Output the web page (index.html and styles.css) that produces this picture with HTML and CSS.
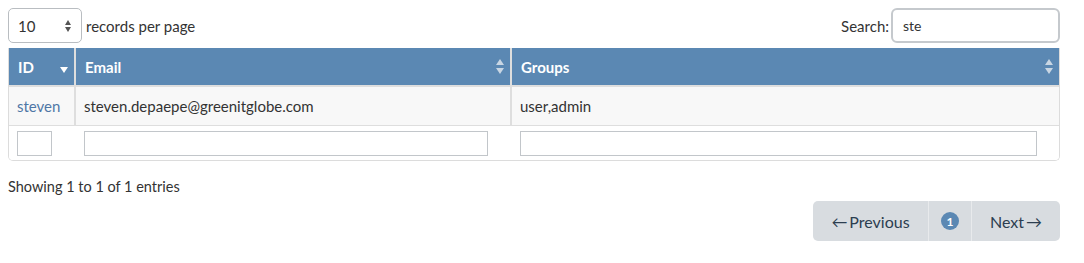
FILE: index.html
```html
<!DOCTYPE html>
<html lang="en">
<head>
    <meta charset="UTF-8">
    <title>Users</title>
    <link rel="stylesheet" href="styles.css">
</head>
<body>
    <div class="toolbar">
        <div class="length">
            <div class="select">10 <span class="spin"></span></div>
            <span>records per page</span>
        </div>
        <div class="search">
            <label>Search:</label>
            <div class="search-box">ste</div>
        </div>
    </div>

    <div class="grid">
        <table>
            <thead>
                <tr>
                    <th class="col-id">ID <span class="sort-desc"></span></th>
                    <th class="col-email">Email <span class="sort-both"></span></th>
                    <th class="col-groups">Groups <span class="sort-both"></span></th>
                </tr>
            </thead>
            <tbody>
                <tr class="data">
                    <td><a href="#">steven</a></td>
                    <td>steven.depaepe@greenitglobe.com</td>
                    <td>user,admin</td>
                </tr>
                <tr class="filters">
                    <td><div class="filter small"></div></td>
                    <td><div class="filter"></div></td>
                    <td><div class="filter"></div></td>
                </tr>
            </tbody>
        </table>
    </div>

    <div class="info">Showing 1 to 1 of 1 entries</div>

    <div class="pager-row">
        <div class="pager">
            <span class="page prev">&larr;&thinsp;Previous</span>
            <span class="page current"><span class="badge">1</span></span>
            <span class="page next">Next&thinsp;&rarr;</span>
        </div>
    </div>
</body>
</html>
```

FILE: styles.css
```css
body {
    margin: 8px;
    font-family: Lato, "Open Sans", sans-serif;
    font-size: 15px;
    color: #333;
    background: #fff;
}
.toolbar {
    display: flex;
    justify-content: space-between;
    align-items: center;
    height: 35px;
}
.length {
    display: flex;
    align-items: center;
    gap: 4px;
}
.select {
    width: 74px;
    height: 35px;
    box-sizing: border-box;
    border: 1px solid #b9bdc1;
    border-radius: 5px;
    padding: 0 9px;
    display: flex;
    align-items: center;
    justify-content: space-between;
}
.spin {
    position: relative;
    width: 7px;
    height: 12px;
}
.spin::before, .spin::after {
    content: "";
    position: absolute;
    left: 0;
    border-left: 3.5px solid transparent;
    border-right: 3.5px solid transparent;
}
.spin::before {
    top: 0;
    border-bottom: 5px solid #555;
}
.spin::after {
    bottom: 0;
    border-top: 5px solid #555;
}
.search {
    display: flex;
    align-items: center;
    gap: 2px;
    margin-right: 16px;
}
.search-box {
    width: 169px;
    height: 35px;
    box-sizing: border-box;
    border: 2px solid #c5c9cd;
    border-radius: 6px;
    padding: 0 10px;
    display: flex;
    align-items: center;
    font-size: 14px;
}
.grid {
    margin-top: 5px;
    margin-right: 16px;
    border: 1px solid #dcdcdc;
    border-top: none;
    border-radius: 0 0 5px 5px;
    overflow: hidden;
}
table {
    width: 100%;
    border-collapse: collapse;
    font-size: 15px;
}
th {
    background: #5b88b3;
    color: #fff;
    font-weight: bold;
    text-align: left;
    height: 38px;
    padding: 0 9px;
    border-right: 2px solid #dedede;
    border-bottom: 2px solid #dedede;
    position: relative;
    box-sizing: border-box;
}
th:last-child, td:last-child {
    border-right: none;
}
.col-id { width: 66px; }
.col-email { width: 436px; }
td {
    padding: 0 8px;
    border-right: 2px solid #dedede;
}
.data td {
    background: #f8f8f8;
    height: 38px;
    border-bottom: 1px solid #dedede;
}
a {
    color: #4f77a6;
    text-decoration: none;
}
.filters td {
    height: 34px;
    background: #fff;
    border-right-color: #fff;
}
.filter {
    height: 25px;
    box-sizing: border-box;
    border: 1px solid #c2c6ca;
    margin-right: 14px;
}
.filter.small {
    width: 35px;
}
.sort-desc {
    position: absolute;
    right: 6px;
    top: 19px;
    border-left: 4px solid transparent;
    border-right: 4px solid transparent;
    border-top: 6px solid #fff;
}
.sort-both {
    position: absolute;
    right: 6px;
    top: 11px;
    width: 8px;
    height: 15px;
}
.sort-both::before, .sort-both::after {
    content: "";
    position: absolute;
    left: 0;
    border-left: 4px solid transparent;
    border-right: 4px solid transparent;
}
.sort-both::before {
    top: 0;
    border-bottom: 6px solid #c9d6e3;
}
.sort-both::after {
    bottom: 0;
    border-top: 6px solid #c9d6e3;
}
.info {
    margin-top: 17px;
    line-height: 18px;
    font-size: 14.5px;
}
.pager-row {
    display: flex;
    justify-content: flex-end;
    margin-top: 5px;
    margin-right: 16px;
}
.pager {
    display: flex;
    background: #d8dce0;
    border-radius: 5px;
    height: 40px;
    overflow: hidden;
}
.page {
    display: flex;
    align-items: center;
    justify-content: center;
    font-size: 16px;
    color: #2c3e50;
    border-right: 1px solid #e8eaec;
}
.page:last-child {
    border-right: none;
}
.prev { width: 115px; }
.current { width: 42px; }
.next { width: 88px; }
.badge {
    width: 18px;
    height: 18px;
    border-radius: 50%;
    background: #5b88b3;
    color: #fff;
    font-size: 12px;
    font-weight: bold;
    display: flex;
    align-items: center;
    justify-content: center;
}
```
